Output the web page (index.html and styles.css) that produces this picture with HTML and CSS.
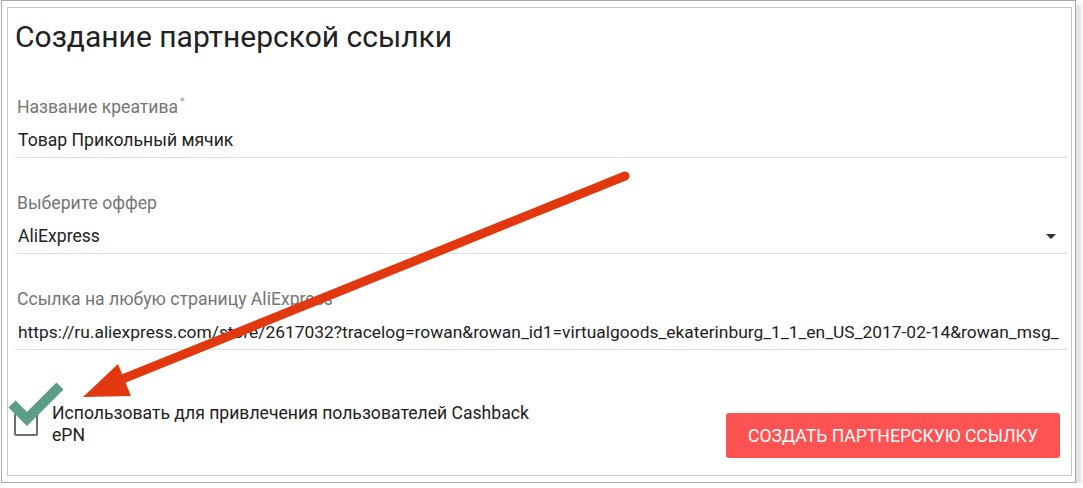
FILE: index.html
```html
<!DOCTYPE html>
<html lang="ru">
<head>
<meta charset="UTF-8">
<title>Создание партнерской ссылки</title>
<link rel="stylesheet" href="styles.css">
</head>
<body>
<div class="frame">
	<div class="card">
		<h1 class="title">Создание партнерской ссылки</h1>

		<div class="field">
			<div class="field-label">Название креатива<sup>*</sup></div>
			<div class="field-input">Товар Прикольный мячик</div>
		</div>

		<div class="field">
			<div class="field-label">Выберите оффер</div>
			<div class="field-input field-select"><span>AliExpress</span><span class="caret"></span></div>
		</div>

		<div class="field">
			<div class="field-label">Ссылка на любую страницу AliExpress</div>
			<div class="field-input field-url">https://ru.aliexpress.com/store/2617032?tracelog=rowan&amp;rowan_id1=virtualgoods_ekaterinburg_1_1_en_US_2017-02-14&amp;rowan_msg_</div>
		</div>

		<div class="actions">
			<label class="check">
				<span class="check-box"></span>
				<span class="check-text">Использовать для привлечения пользователей Cashback ePN</span>
			</label>
			<button class="btn" type="button">Создать партнерскую ссылку</button>
		</div>
	</div>
</div>

<!-- annotation marks drawn over the form -->
<svg class="marks" width="1083" height="488" viewBox="0 0 1083 488">
	<line x1="625" y1="176" x2="120" y2="380" stroke="#e2380f" stroke-width="9" stroke-linecap="round"/>
	<polygon points="83,397 118,364 131,396" fill="#e2380f"/>
	<polyline points="12,404 27,419 60,386" fill="none" stroke="#5b9d89" stroke-width="10"/>
</svg>
</body>
</html>
```

FILE: styles.css
```css
*{margin:0;padding:0;box-sizing:border-box;}
body{background:#fff;font-family:Roboto,"Noto Sans",sans-serif;color:#212121;position:relative;}

.frame{margin-left:1px;width:1075px;height:483px;border:1px solid #a9a9a9;padding:6px 3px 6px 5px;box-shadow:5px 5px 3px #e3e3e3;background:#fff;}
.card{height:100%;border:1px solid #c6c6c6;padding:11px 4px 0 7px;}

.title{font-size:30px;line-height:36px;font-weight:400;color:#212121;}

.field{margin-bottom:34px;}
.title + .field{margin-top:41px;}
.field-label{font-size:17.6px;line-height:22px;color:#757575;padding-left:2px;}
.field-label sup{font-size:11px;vertical-align:top;line-height:11px;color:#9e9e9e;margin-left:2px;}
.field-input{margin-top:11px;font-size:17.6px;line-height:22px;padding:0 0 6px 3px;border-bottom:1px solid #e0e0e0;white-space:nowrap;overflow:hidden;}
.field-url{font-size:17.4px;}
.field-select{display:flex;align-items:center;justify-content:space-between;}
.caret{width:0;height:0;border-left:5px solid transparent;border-right:5px solid transparent;border-top:5px solid #333;margin-right:11px;}

.actions{display:flex;justify-content:space-between;align-items:flex-start;margin-top:52px;}
.check{display:flex;align-items:flex-start;}
.check-box{width:24px;height:23px;border:2px solid #6d6d6d;border-radius:2px;margin:11px 0 0 -1px;flex:none;}
.check-text{width:490px;margin-left:14px;font-size:17.6px;line-height:22px;color:#212121;}

.btn{margin:11px 7px 0 0;height:45px;padding:0 22px;border:0;border-radius:3px;background:#ff5252;color:#fff;font-family:Roboto,"Noto Sans",sans-serif;font-size:17.6px;text-transform:uppercase;}

.marks{position:absolute;top:0;left:0;pointer-events:none;}
```
